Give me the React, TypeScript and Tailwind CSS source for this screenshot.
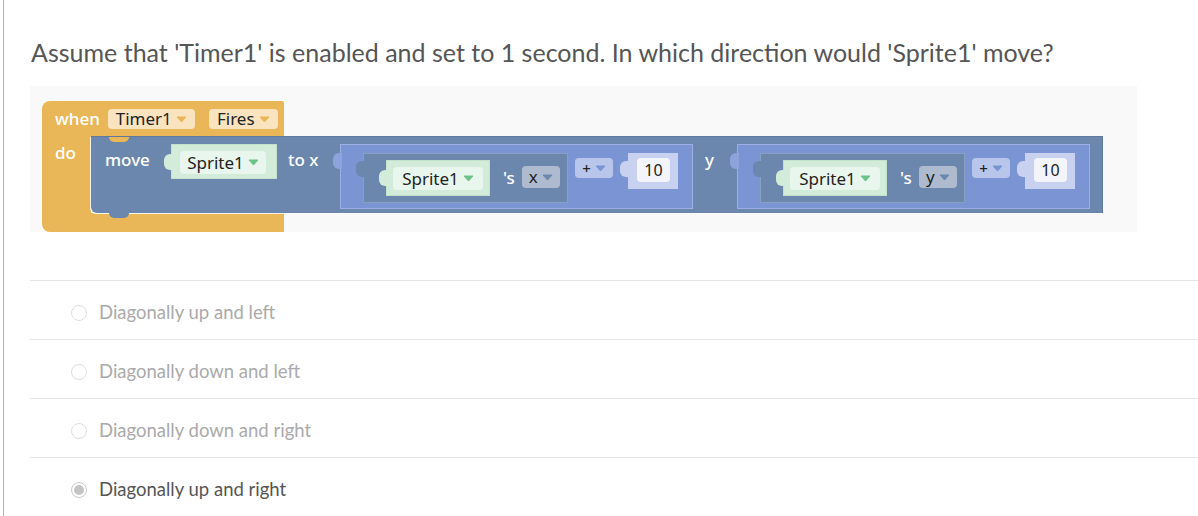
import React from "react";

const ORANGE = "bg-[#e9b758]";

// little dropdown caret used inside block fields
const Caret = ({ color }: { color: string }) => (
  <svg width="11" height="7" viewBox="0 0 11 7" className="ml-[4px] shrink-0">
    <path d="M1 1 L10 1 L5.5 6 Z" fill={color} stroke={color} strokeWidth="1" strokeLinejoin="round" />
  </svg>
);

// the puzzle tab sticking out on the left of a value block
const Tab = ({ color, top = 8 }: { color: string; top?: number }) => (
  <div
    className={`absolute left-[-8px] w-[9px] h-[16px] rounded-l-[6px] ${color}`}
    style={{ top }}
  />
);

const ComponentBlock = ({ w, h, pillW, pad }: { w: number; h: number; pillW: number; pad: number }) => (
  <div
    className="relative shrink-0 bg-[#d3ecd9] border border-[#c3e2cb]"
    style={{ width: w, height: h }}
  >
    <Tab color="bg-[#d3ecd9]" top={9} />
    <div
      className="flex items-center justify-center h-[23px] rounded-[4px] bg-[#e9f6ed] text-[17px] text-[#222]"
      style={{ width: pillW, marginLeft: pad, marginTop: 6 }}
    >
      Sprite1
      <Caret color="#6cc28a" />
    </div>
  </div>
);

const MathBlock = ({ axis }: { axis: string }) => (
  <div className="relative shrink-0 w-[353px] h-[65px] bg-[#7b94d3] border border-[#9cb0e4] flex items-start pt-[8px]">
    <Tab color="bg-[#8da3dc]" top={8} />
    {/* getter: Sprite1 's x */}
    <div className="relative ml-[22px] w-[205px] h-[50px] bg-[#6c87ad] border border-[#8aa0c0] flex items-start pt-[6px]">
      <Tab color="bg-[#6c87ad]" top={7} />
      <div className="ml-[22px]">
        <ComponentBlock w={104} h={36} pillW={90} pad={6} />
      </div>
      <span className="ml-[13px] mt-[6px] text-white font-medium text-[17px] leading-[24px]">'s</span>
      <div className="ml-[7px] mt-[6px] w-[38px] h-[22px] rounded-[4px] bg-[#aebbcf] flex items-center justify-center text-[17px] text-[#222]">
        {axis}
        <Caret color="#6c87ad" />
      </div>
    </div>
    <div className="ml-[7px] mt-[5px] w-[38px] h-[20px] rounded-[4px] bg-[#b9c6ec] flex items-center justify-center text-[15px] text-[#222] font-medium">
      +
      <Caret color="#7b94d3" />
    </div>
    <div className="relative ml-[15px] w-[50px] h-[36px] bg-[#c8d1ef] pt-[5px] pl-[9px]">
      <Tab color="bg-[#c8d1ef]" top={8} />
      <div className="w-[33px] h-[24px] rounded-[4px] bg-[#f3f5fb] flex items-center justify-center text-[16px] text-[#222]">
        10
      </div>
    </div>
  </div>
);

const options = [
  { label: "Diagonally up and left", checked: false },
  { label: "Diagonally down and left", checked: false },
  { label: "Diagonally down and right", checked: false },
  { label: "Diagonally up and right", checked: true },
];

export default function App() {
  return (
    <div className="w-[1198px] h-[516px] bg-white overflow-hidden">
      <div className="ml-[3px] h-full border-l border-[#b3b3b3] pl-[26px] font-['Lato','Liberation_Sans',sans-serif]">
        <h1 className="pt-[36px] text-[25px] leading-[32px] text-[#555] font-normal pl-[1px]">
          Assume that 'Timer1' is enabled and set to 1 second. In which direction would 'Sprite1' move?
        </h1>

        {/* blocks picture */}
        <div className="mt-[18px] w-[1107px] h-[146px] bg-[#f9f9f9] pt-[15px] pl-[12px] font-['Noto_Sans','DejaVu_Sans',sans-serif]">
          <div className="relative w-[242px] flex flex-col">
            <div className={`h-[35px] ${ORANGE} rounded-tl-[8px] rounded-tr-[2px] flex items-center pl-[13px] pt-[1px]`}>
              <span className="text-white font-medium text-[17px]">when</span>
              <div className="ml-[8px] w-[87px] h-[20px] rounded-[4px] bg-[#fae4bf] flex items-center justify-center text-[17px] text-[#222]">
                Timer1
                <Caret color="#e9b758" />
              </div>
              <div className="ml-[14px] w-[69px] h-[20px] rounded-[4px] bg-[#fae4bf] flex items-center justify-center text-[17px] text-[#222]">
                Fires
                <Caret color="#e9b758" />
              </div>
            </div>

            <div className="flex h-[77px]">
              <div className={`w-[49px] shrink-0 ${ORANGE} pl-[13px] pt-[5px] text-white font-medium text-[17px] leading-[24px]`}>
                do
              </div>
              {/* move block */}
              <div className="relative shrink-0 w-[1012px] h-[77px] bg-[#6c87ad] border-t border-r border-[#5f799d] rounded-bl-[6px] shadow-[-1px_1px_0_rgba(255,255,255,0.85)] flex items-start pl-[14px] pt-[7px]">
                <div className={`absolute top-0 left-[18px] w-[20px] h-[5px] rounded-b-full ${ORANGE}`} />
                <div className="absolute bottom-[-5px] left-[18px] w-[20px] h-[5px] rounded-b-full bg-[#6c87ad]" />
                <div className="w-[45px] mt-[4px] text-white font-medium text-[17px] leading-[24px]">move</div>
                <div className="ml-[21px]">
                  <ComponentBlock w={106} h={35} pillW={86} pad={8} />
                </div>
                <div className="ml-[11px] w-[33px] mt-[4px] text-white font-medium text-[17px] leading-[24px]">to x</div>
                <div className="ml-[19px]">
                  <MathBlock axis="x" />
                </div>
                <div className="ml-[12px] w-[12px] mt-[4px] text-white font-medium text-[17px] leading-[24px]">y</div>
                <div className="ml-[20px]">
                  <MathBlock axis="y" />
                </div>
              </div>
            </div>

            <div className={`h-[19px] ${ORANGE} rounded-bl-[8px]`} />
          </div>
        </div>

        {/* answer options */}
        <div className="mt-[48px]">
          {options.map((o) => (
            <div key={o.label} className="h-[59px] border-t border-[#e6e6e6] flex items-center pl-[41px] pt-[6px]">
              <div
                className={`w-[16px] h-[16px] rounded-full border flex items-center justify-center ${
                  o.checked ? "border-[#c9c9c9] bg-white" : "border-[#dedede] bg-white"
                }`}
              >
                {o.checked && <div className="w-[10px] h-[10px] rounded-full bg-[#c4c4c4]" />}
              </div>
              <span className={`ml-[12px] text-[18.5px] ${o.checked ? "text-[#555]" : "text-[#aaa]"}`}>
                {o.label}
              </span>
            </div>
          ))}
        </div>
      </div>
    </div>
  );
}
